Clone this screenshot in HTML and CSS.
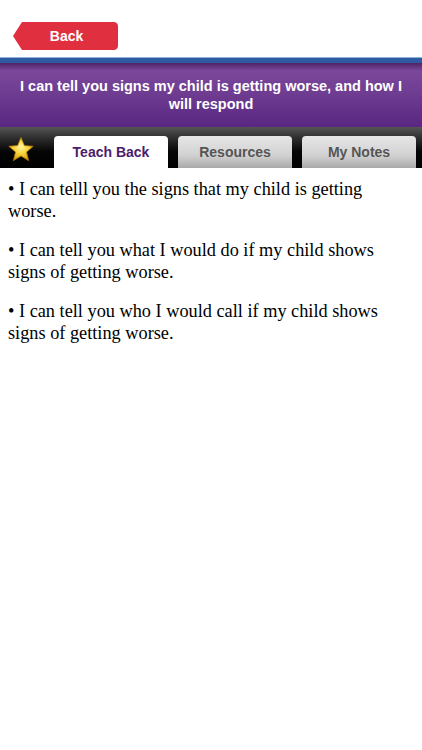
FILE: index.html
```html
<!DOCTYPE html>
<html>
<head>
<meta charset="utf-8">
<link rel="stylesheet" href="styles.css">
</head>
<body>
<div class="top">
  <button class="back">Back</button>
</div>
<div class="rule"></div>
<div class="title">I can tell you signs my child is getting worse, and how I will respond</div>
<div class="tabbar">
  <div class="star">
    <svg width="28" height="26" viewBox="0 0 28 26">
      <defs>
        <radialGradient id="sg" cx="50%" cy="40%" r="60%">
          <stop offset="0" stop-color="#fff6a0"/>
          <stop offset="0.5" stop-color="#f7d23a"/>
          <stop offset="1" stop-color="#d99a0c"/>
        </radialGradient>
      </defs>
      <path d="M14 1.5 L17.4 9.6 L26.2 10.3 L19.5 16 L21.6 24.6 L14 20 L6.4 24.6 L8.5 16 L1.8 10.3 L10.6 9.6 Z" fill="url(#sg)" stroke="#b07a08" stroke-width="0.8" stroke-linejoin="round"/>
    </svg>
  </div>
  <div class="tab active">Teach Back</div>
  <div class="tab">Resources</div>
  <div class="tab">My Notes</div>
</div>
<div class="content">
  <p>• I can telll you the signs that my child is getting worse.</p>
  <p>• I can tell you what I would do if my child shows signs of getting worse.</p>
  <p>• I can tell you who I would call if my child shows signs of getting worse.</p>
</div>
</body>
</html>
```
FILE: styles.css
```css
html, body { margin: 0; padding: 0; background: #fff; }
body { width: 422px; font-family: "Liberation Sans", Arial, sans-serif; }
.top { height: 57px; display: flex; align-items: flex-start; padding-left: 13px; }
.back {
  margin-top: 22px;
  width: 105px; height: 28px;
  border: none; padding: 0 0 0 2px;
  background: #e0303f;
  color: #fff; font: bold 14px "Liberation Sans", Arial, sans-serif;
  clip-path: polygon(9px 0, 101px 0, 103px 0.5px, 104.5px 2px, 105px 4px, 105px 24px, 104.5px 26px, 103px 27.5px, 101px 28px, 9px 28px, 0 14px);
}
.rule { height: 5px; background: #2d5aa2; border-top: 1px solid #8fb0dd; }
.title {
  height: 64px;
  box-sizing: border-box;
  display: flex; align-items: center; justify-content: center; text-align: center;
  padding: 1px 14px 0;
  color: #fff; font-weight: bold; font-size: 14.5px; line-height: 17.5px;
  background: linear-gradient(to bottom, #4f2468 0%, #7a479b 12%, #6f3d92 45%, #5a2681 100%);
}
.tabbar {
  height: 41px; box-sizing: border-box;
  display: flex; align-items: flex-end; gap: 10px;
  padding: 0 6px 0 7px;
  background: linear-gradient(to bottom, #555 0%, #2a2a2a 30%, #050505 60%, #000 100%);
}
.star { width: 28px; height: 26px; align-self: center; margin-right: 9px; margin-top: 2px; }
.tab {
  width: 114px; height: 32px;
  border-radius: 4px 4px 0 0;
  display: flex; align-items: center; justify-content: center;
  font-weight: bold; font-size: 14px; color: #555;
  background: linear-gradient(to bottom, #e6e6e6 0%, #d2d2d2 60%, #a9a9a9 100%);
}
.tab.active { background: #fff; color: #4b1d6c; }
.content { padding: 10px 10px 0 8px; font-family: "Liberation Serif", "Times New Roman", serif; font-size: 18.3px; line-height: 22px; color: #000; }
.content p { margin: 0 0 17px; }
```
